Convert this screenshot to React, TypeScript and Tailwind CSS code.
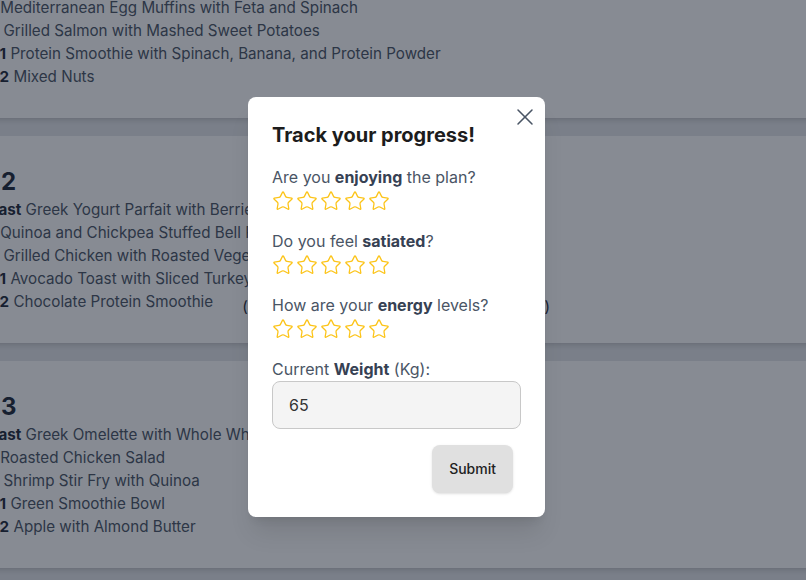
import React from "react";
import { Star, X } from "lucide-react";

interface Meal {
  label: string;
  dish: string;
}

interface DayPlan {
  day: number;
  meals: Meal[];
}

const plans: DayPlan[] = [
  {
    day: 1,
    meals: [
      { label: "Breakfast", dish: "Overnight Oats with Chia Seeds and Berries" },
      { label: "Lunch", dish: "Mediterranean Egg Muffins with Feta and Spinach" },
      { label: "Dinner", dish: "Grilled Salmon with Mashed Sweet Potatoes" },
      { label: "Snack 1", dish: "Protein Smoothie with Spinach, Banana, and Protein Powder" },
      { label: "Snack 2", dish: "Mixed Nuts" },
    ],
  },
  {
    day: 2,
    meals: [
      { label: "Breakfast", dish: "Greek Yogurt Parfait with Berries and Granola" },
      { label: "Lunch", dish: "Quinoa and Chickpea Stuffed Bell Peppers" },
      { label: "Dinner", dish: "Grilled Chicken with Roasted Vegetables" },
      { label: "Snack 1", dish: "Avocado Toast with Sliced Turkey" },
      { label: "Snack 2", dish: "Chocolate Protein Smoothie" },
    ],
  },
  {
    day: 3,
    meals: [
      { label: "Breakfast", dish: "Greek Omelette with Whole Wheat Toast" },
      { label: "Lunch", dish: "Roasted Chicken Salad" },
      { label: "Dinner", dish: "Shrimp Stir Fry with Quinoa" },
      { label: "Snack 1", dish: "Green Smoothie Bowl" },
      { label: "Snack 2", dish: "Apple with Almond Butter" },
    ],
  },
];

function Stars() {
  return (
    <div className="flex gap-0.5 py-px">
      {[0, 1, 2, 3, 4].map((i) => (
        <Star key={i} size={22} strokeWidth={1.4} className="text-[#fcc419]" />
      ))}
    </div>
  );
}

function Question({ children }: { children: React.ReactNode }) {
  return (
    <div className="mt-4">
      <p className="text-base leading-6 text-gray-600">{children}</p>
      <Stars />
    </div>
  );
}

export default function App() {
  return (
    <div
      className="relative w-[806px] h-[580px] overflow-hidden bg-gray-200"
      style={{ fontFamily: "Inter, 'Noto Sans', sans-serif" }}
    >
      {/* Meal plan behind the dialog */}
      <div className="-mt-[89px] -ml-[80px] w-[1000px] flex flex-col gap-[18px]">
        {plans.map((plan) => (
          <div key={plan.day} className="bg-white shadow-md px-[30px] py-[30px]">
            <h2 className="text-2xl leading-8 font-bold text-gray-800">Day {plan.day}</h2>
            <div className="text-[15.2px] leading-[23px] text-gray-600">
              {plan.meals.map((meal, i) => (
                <div key={meal.label}>
                  <span className="font-bold text-gray-800">{meal.label}</span> {meal.dish}
                  {plan.day === 2 && i === 4 && (
                    <span className="relative top-[5px] inline-flex w-[308px] justify-between ml-[29px] text-gray-800">
                      <span>(</span>
                      <span>Total: 1,720 kcal</span>
                      <span>)</span>
                    </span>
                  )}
                </div>
              ))}
            </div>
          </div>
        ))}
      </div>

      {/* Overlay */}
      <div className="absolute inset-0 bg-gray-900/50" />

      {/* Dialog */}
      <div className="absolute left-[248px] top-[97px] w-[297px] bg-white rounded-lg p-6 shadow-xl">
        <button className="absolute top-[6px] right-[6px] text-gray-600">
          <X size={28} strokeWidth={1.3} />
        </button>
        <h2 className="text-xl leading-7 font-bold text-[#1c1c1c]">Track your progress!</h2>

        <Question>
          Are you <b className="text-gray-700">enjoying</b> the plan?
        </Question>
        <Question>
          Do you feel <b className="text-gray-700">satiated</b>?
        </Question>
        <Question>
          How are your <b className="text-gray-700">energy</b> levels?
        </Question>

        <div className="mt-4">
          <p className="text-base leading-6 text-gray-600">
            Current <b className="text-gray-700">Weight</b> (Kg):
          </p>
          <input
            defaultValue="65"
            className="w-full h-12 px-4 rounded-lg border border-[#c8c8c8] bg-[#f4f4f4] text-base text-[#333] outline-none"
          />
        </div>

        <div className="mt-4 flex justify-end">
          <button className="mr-2 h-12 px-[17px] rounded-lg bg-[#e0e0e0] text-sm font-medium text-[#222] shadow-sm">
            Submit
          </button>
        </div>
      </div>
    </div>
  );
}
